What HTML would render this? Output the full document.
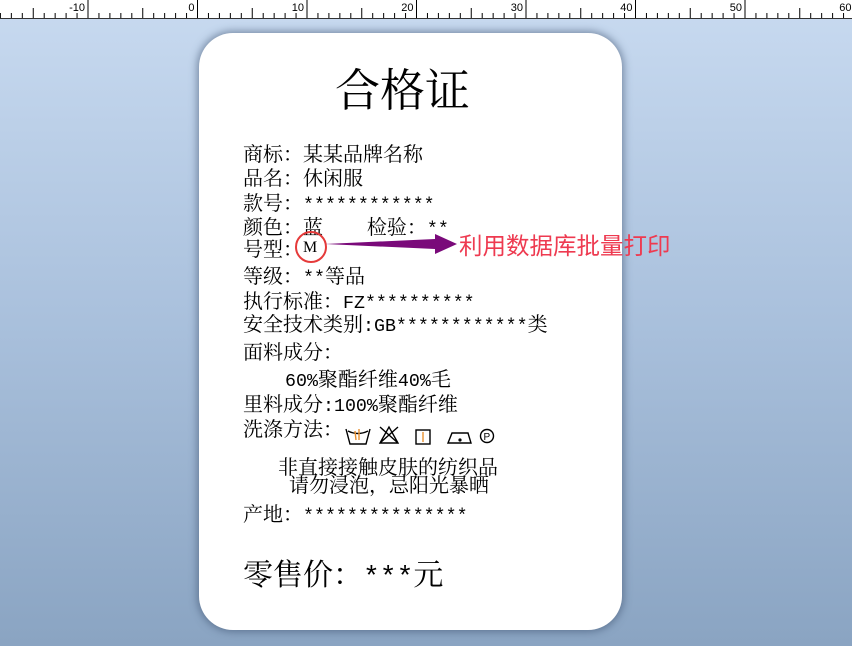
<!DOCTYPE html>
<html><head><meta charset="utf-8"><style>
body{margin:0;width:852px;height:646px;overflow:hidden;background:linear-gradient(#c8daf0,#a9c0dc 50%,#8aa4c2);font-family:"Noto Serif CJK SC","Noto Sans CJK SC",serif;position:relative}
.card{position:absolute;left:199px;top:33px;width:423px;height:597px;background:#fff;border-radius:34px;box-shadow:0 0 8px 2px rgba(60,80,110,.55)}
.t{position:absolute;font-size:20px;color:#000;white-space:nowrap;line-height:22px}
.m{font-family:"Liberation Mono",monospace;font-size:18.3px}
</style></head><body>
<svg width="852" height="19" style="position:absolute;left:0;top:0"><rect width="852" height="18" fill="#fff"/><line x1="0" y1="18.5" x2="852" y2="18.5" stroke="#333"/><g stroke="#000" id="tk"></g></svg>
<div class="card"></div>
<div class="t" style="left:335px;top:62px;font-size:45px;line-height:50px">合格证</div>
<div class="t" style="left:243px;top:142px">商标：某某品牌名称</div>
<div class="t" style="left:243px;top:166px">品名：休闲服</div>
<div class="t" style="left:243px;top:191px">款号：<span class="m">************</span></div>
<div class="t" style="left:243px;top:215px">颜色：蓝<span class="m">&nbsp;&nbsp;&nbsp;&nbsp;</span>检验：<span class="m">**</span></div>
<div class="t" style="left:243px;top:237px">号型：</div>
<div class="t" style="left:303px;top:237px;font-size:16px;font-family:'Liberation Serif',serif">M</div>
<div style="position:absolute;left:295px;top:231px;width:28px;height:28px;border:2px solid #e53a3a;border-radius:50%"></div>
<svg style="position:absolute;left:325px;top:232px" width="140" height="24"><polygon points="0,12 110,7 110,2 132,12 110,22 110,17" fill="#7a0a7a"/></svg>
<div class="t" style="left:459px;top:231px;color:#ee3a50;font-family:'Noto Sans CJK SC',sans-serif;font-size:23.5px;line-height:26px">利用数据库批量打印</div>
<div class="t" style="left:243px;top:264px">等级：<span class="m">**</span>等品</div>
<div class="t" style="left:243px;top:289px">执行标准：<span class="m">FZ**********</span></div>
<div class="t" style="left:243px;top:312px">安全技术类别<span class="m">:GB************</span>类</div>
<div class="t" style="left:243px;top:340px">面料成分：</div>
<div class="t" style="left:285px;top:367px"><span class="m">60%</span>聚酯纤维<span class="m">40%</span>毛</div>
<div class="t" style="left:243px;top:392px">里料成分<span class="m">:100%</span>聚酯纤维</div>
<div class="t" style="left:243px;top:417px">洗涤方法：</div>
<svg style="position:absolute;left:344px;top:424px" width="152" height="24" fill="none" stroke="#000" stroke-width="1.4">
<path d="M2,5 L6,20 L22,20 L26,5 M4,7 Q14,12 24,7"/><path d="M11,7 L12,16 M15,5 L15,16" stroke="#e89030"/>
<path d="M36,19 L45,3 L54,19 Z M36,3 L54,19 M54,3 L36,19"/>
<rect x="72" y="6" width="14" height="14"/><path d="M79,8 L79,18" stroke="#e89030"/>
<path d="M104,19 L108,9 L124,9 L127,19 Z"/><circle cx="116" cy="16" r="0.9" fill="#000"/>
<circle cx="143" cy="12" r="6.5"/><text x="139.5" y="16" font-size="10" fill="#000" stroke="none" font-family="Liberation Sans">P</text>
</svg>
<div class="t" style="left:278px;top:455px">非直接接触皮肤的纺织品</div>
<div class="t" style="left:289px;top:473px">请勿浸泡，忌阳光暴晒</div>
<div class="t" style="left:243px;top:502px">产地：<span class="m">***************</span></div>
<div class="t" style="left:243px;top:555px;font-size:30px;line-height:34px">零售价：<span class="m" style="font-size:28px">***</span>元</div>
<script>
var g=document.getElementById('tk'),s='';
for(var i=-18;i<=60;i++){var x=197.5+i*10.95;var h=(i%10==0)?18:(i%5==0?10:5);s+='<line x1="'+x+'" y1="'+(18-h)+'" x2="'+x+'" y2="18"/>';
if(i%10==0)s+='<text x="'+(x-3)+'" y="11" font-size="11" text-anchor="end" font-family="Liberation Sans" stroke="none">'+i+'</text>';}
g.innerHTML=s;
</script>
</body></html>
